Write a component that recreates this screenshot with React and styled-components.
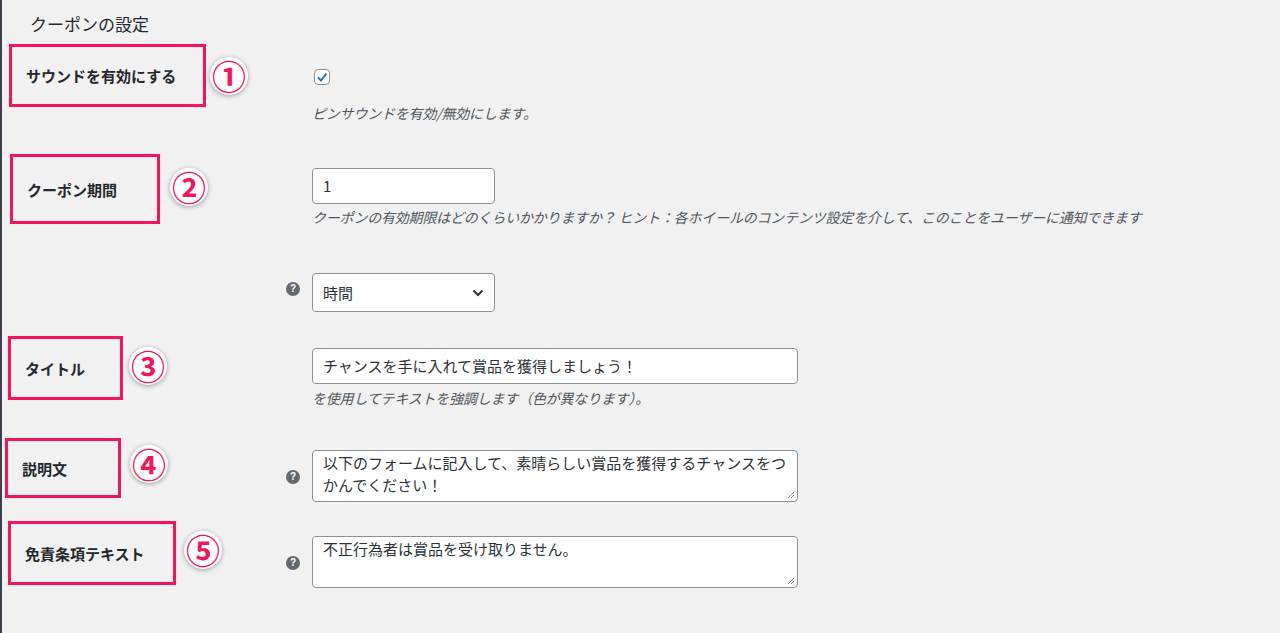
import React from "react";
import styled, { createGlobalStyle } from "styled-components";

const Global = createGlobalStyle`
  html, body { margin: 0; padding: 0; background: #f1f1f1; }
  body { font-family: "Noto Sans CJK JP", "Noto Sans", sans-serif; color: #1d2327; }
`;

const Page = styled.div`
  width: 1280px;
  height: 633px;
  overflow: hidden;
  border-left: 2px solid #3c434a;
  box-sizing: border-box;
`;

const Title = styled.h2`
  margin: 0;
  padding: 11px 0 0 28px;
  height: 39px;
  box-sizing: border-box;
  font-size: 17px;
  font-weight: 400;
  color: #23282d;
`;

const Row = styled.div`
  display: grid;
  grid-template-columns: 282px 28px 1fr;
  height: ${p => p.h}px;
`;

const LabelCell = styled.div`
  display: flex;
  align-items: flex-start;
`;

const Mark = styled.div`
  margin-top: ${p => p.top}px;
  margin-left: ${p => p.left}px;
  width: ${p => p.w}px;
  height: ${p => p.hh}px;
  border: 3px solid #f5145a;
  box-sizing: border-box;
  display: flex;
  align-items: center;
  padding-left: ${p => p.pad || 14}px;
  font-size: 15px;
  font-weight: 700;
  color: #23282d;
  flex-shrink: 0;
  white-space: nowrap;
`;

const Circle = styled.div`
  margin-top: ${p => p.top}px;
  margin-left: ${p => p.gap}px;
  width: 38px;
  height: 38px;
  border-radius: 50%;
  background: #fff;
  box-shadow: 0 1px 5px rgba(0, 0, 0, 0.35);
  display: flex;
  align-items: center;
  justify-content: center;
  color: #f5145a;
  font-size: 34px;
  font-weight: 700;
  line-height: 1;
  font-family: "Noto Sans CJK JP", sans-serif;
`;

const HelpCell = styled.div`
  padding-top: ${p => p.top || 0}px;
`;

const Help = styled.span`
  display: inline-block;
  width: 14px;
  height: 14px;
  border-radius: 50%;
  background: #646970;
  color: #fff;
  font-size: 10px;
  font-weight: 700;
  text-align: center;
  line-height: 14px;
  margin-left: 2px;
  font-family: "Liberation Sans", sans-serif;
`;

const Field = styled.div`
  padding-top: ${p => p.top}px;
  display: flex;
  flex-direction: column;
  align-items: flex-start;
`;

const Check = styled.span`
  width: 16px;
  height: 16px;
  margin-left: 2px;
  border: 1px solid #8c8f94;
  border-radius: 4px;
  background: #fff;
  box-sizing: border-box;
  display: flex;
  align-items: center;
  justify-content: center;
`;

const Desc = styled.p`
  margin: ${p => p.mt}px 0 0;
  font-size: 14px;
  font-style: italic;
  color: #50575e;
  white-space: nowrap;
  letter-spacing: -0.2px;
`;

const Input = styled.div`
  width: ${p => p.w}px;
  height: ${p => p.hh}px;
  box-sizing: border-box;
  background: #fff;
  border: 1px solid #8c8f94;
  border-radius: 4px;
  padding: ${p => (p.multi ? "1px 10px" : "0 10px")};
  display: flex;
  align-items: ${p => (p.multi ? "flex-start" : "center")};
  justify-content: space-between;
  font-size: 15px;
  line-height: 22px;
  color: #2c3338;
  position: relative;
`;

const Grip = styled.svg`
  position: absolute;
  right: 2px;
  bottom: 2px;
`;

const Resize = () => (
  <Grip width="8" height="8" viewBox="0 0 8 8">
    <path d="M7 1L1 7M7 4L4 7" stroke="#888" strokeWidth="1" />
  </Grip>
);

export default function App() {
  return (
    <Page>
      <Global />
      <Title>クーポンの設定</Title>

      <Row h={110}>
        <LabelCell>
          <Mark top={5} left={7} w={197} hh={63}>サウンドを有効にする</Mark>
          <Circle top={18} gap={4}>①</Circle>
        </LabelCell>
        <HelpCell />
        <Field top={30}>
          <Check>
            <svg width="12" height="12" viewBox="0 0 12 12">
              <path d="M2 6.5L5 9.5L10.5 2.5" fill="none" stroke="#2271b1" strokeWidth="2" />
            </svg>
          </Check>
          <Desc mt={18}>ピンサウンドを有効/無効にします。</Desc>
        </Field>
      </Row>

      <Row h={110}>
        <LabelCell>
          <Mark top={5} left={8} w={150} hh={70}>クーポン期間</Mark>
          <Circle top={19} gap={10}>②</Circle>
        </LabelCell>
        <HelpCell />
        <Field top={19}>
          <Input w={183} hh={36}>1</Input>
          <Desc mt={3}>クーポンの有効期限はどのくらいかかりますか？ ヒント：各ホイールのコンテンツ設定を介して、このことをユーザーに通知できます</Desc>
        </Field>
      </Row>

      <Row h={65}>
        <LabelCell />
        <HelpCell top={14}><Help>?</Help></HelpCell>
        <Field top={14}>
          <Input w={183} hh={39}>
            時間
            <svg width="12" height="8" viewBox="0 0 12 8">
              <path d="M1.5 1.5L6 6L10.5 1.5" fill="none" stroke="#2c3338" strokeWidth="2" />
            </svg>
          </Input>
        </Field>
      </Row>

      <Row h={100}>
        <LabelCell>
          <Mark top={12} left={6} w={115} hh={64}>タイトル</Mark>
          <Circle top={23} gap={6}>③</Circle>
        </LabelCell>
        <HelpCell />
        <Field top={24}>
          <Input w={486} hh={36}>チャンスを手に入れて賞品を獲得しましょう！</Input>
          <Desc mt={4}>を使用してテキストを強調します（色が異なります）。</Desc>
        </Field>
      </Row>

      <Row h={85}>
        <LabelCell>
          <Mark top={14} left={3} w={116} hh={60}>説明文</Mark>
          <Circle top={21} gap={9}>④</Circle>
        </LabelCell>
        <HelpCell top={37}><Help>?</Help></HelpCell>
        <Field top={26}>
          <Input multi w={486} hh={52}>
            以下のフォームに記入して、素晴らしい賞品を獲得するチャンスをつかんでください！
            <Resize />
          </Input>
        </Field>
      </Row>

      <Row h={113}>
        <LabelCell>
          <Mark top={12} left={6} w={168} hh={64}>免責条項テキスト</Mark>
          <Circle top={22} gap={8}>⑤</Circle>
        </LabelCell>
        <HelpCell top={38}><Help>?</Help></HelpCell>
        <Field top={27}>
          <Input multi w={486} hh={52}>
            不正行為者は賞品を受け取りません。
            <Resize />
          </Input>
        </Field>
      </Row>
    </Page>
  );
}
